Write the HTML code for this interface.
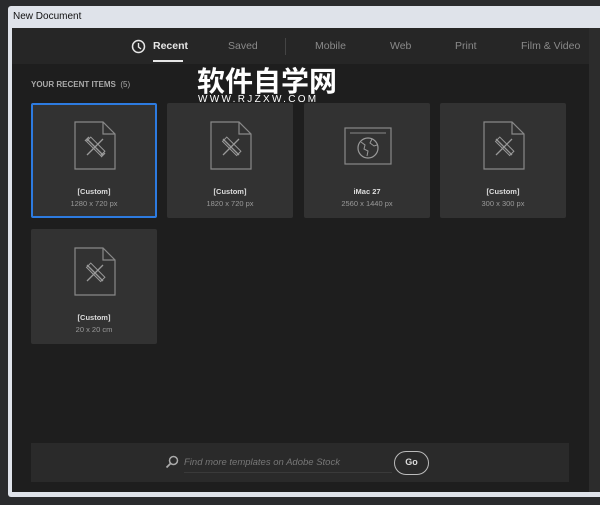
<!DOCTYPE html>
<html><head><style>
*{margin:0;padding:0;box-sizing:border-box}
body{width:600px;height:505px;background:#2a2b2d;position:relative;overflow:hidden;font-family:"Liberation Sans",sans-serif}
.frame{position:absolute;left:8px;top:6px;width:600px;height:491px;background:#dfe3ea;border-radius:3px}
.title{position:absolute;left:13px;top:11px;font-size:10px;color:#111}
.content{position:absolute;left:12px;top:28px;width:577px;height:464px;background:#1e1e1e}
.right{position:absolute;left:589px;top:28px;width:11px;height:464px;background:#2c2c2c}
.tabs{position:absolute;left:0;top:0;width:577px;height:36px;background:#262626}
.tab{position:absolute;top:12px;font-size:10.5px;color:#8a8a8a}
.tab.on{color:#e6e6e6;font-weight:bold}
.ul{position:absolute;left:141px;top:32px;width:30px;height:2px;background:#e6e6e6}
.sep{position:absolute;left:273px;top:10px;width:1px;height:17px;background:#444}
.hdr{position:absolute;left:19px;top:52px;font-size:8px;font-weight:bold;color:#aaa}
.card{position:absolute;width:126px;height:115px;background:#323232;border-radius:2px}
.card.sel{border:2px solid #2d7be0}
.card svg{position:absolute;left:43px;top:18px}
.n{position:absolute;left:0;width:100%;top:84px;text-align:center;font-size:7.5px;color:#ddd;font-weight:bold}
.d{position:absolute;left:0;width:100%;top:96px;text-align:center;font-size:7.5px;color:#999}
.search{position:absolute;left:19px;top:415px;width:538px;height:39px;background:#2a2a2a}
.st{position:absolute;left:153px;top:14px;font-size:9.5px;font-style:italic;color:#777}
.sl{position:absolute;left:153px;top:29px;width:208px;height:1px;background:#3a3a3a}
.go{position:absolute;left:363px;top:8px;width:35px;height:24px;border:1.5px solid #bbb;border-radius:12px;color:#ddd;font-size:9px;font-weight:bold;text-align:center;line-height:21px}
.wm{position:absolute;left:185px;top:37px;font-family:"Noto Sans CJK SC",sans-serif;font-weight:bold;font-size:28px;color:#fff;letter-spacing:0px;line-height:30px}
.wm2{position:absolute;left:186px;top:66px;font-size:10px;color:#fff;letter-spacing:2.3px}
</style></head><body>
<div class="frame"></div>
<div class="title">New Document</div>
<div class="right"></div>
<div class="content">
 <div class="tabs">
  <svg style="position:absolute;left:119px;top:11px" width="15" height="15" viewBox="0 0 15 15"><circle cx="7.5" cy="7.5" r="6" fill="none" stroke="#e6e6e6" stroke-width="1.5"/><path d="M7.5 4v4l2.5 2" fill="none" stroke="#e6e6e6" stroke-width="1.4"/></svg>
  <div class="tab on" style="left:141px">Recent</div>
  <div class="tab" style="left:216px">Saved</div>
  <div class="sep"></div>
  <div class="tab" style="left:303px">Mobile</div>
  <div class="tab" style="left:378px">Web</div>
  <div class="tab" style="left:443px">Print</div>
  <div class="tab" style="left:509px">Film &amp; Video</div>
  <div class="ul"></div>
 </div>
 <div class="hdr">YOUR RECENT ITEMS &nbsp;<span style="font-weight:normal">(5)</span></div>
 <div class="wm">软件自学网</div>
 <div class="wm2">WWW.RJZXW.COM</div>

 <div class="card sel" style="left:19px;top:75px"><svg style="left:41px;top:16px" width="42" height="49" viewBox="0 0 42 49"><path d="M1 1h28l12 12v35H1z M29 1v12h12" fill="none" stroke="#888" stroke-width="1.2"/><path d="M13 18l16 16M29 18L13 34M15 16l-4 4 M27 36l4-4" fill="none" stroke="#999" stroke-width="1.3"/><rect x="11" y="22" width="20" height="6" transform="rotate(45 21 26)" fill="none" stroke="#999" stroke-width="1"/></svg><div class="n" style="top:82px">[Custom]</div><div class="d" style="top:94px">1280 x 720 px</div></div>

 <div class="card" style="left:155px;top:75px"><svg width="42" height="49" viewBox="0 0 42 49"><path d="M1 1h28l12 12v35H1z M29 1v12h12" fill="none" stroke="#888" stroke-width="1.2"/><path d="M13 18l16 16M29 18L13 34" fill="none" stroke="#999" stroke-width="1.3"/><rect x="11" y="22" width="20" height="6" transform="rotate(45 21 26)" fill="none" stroke="#999" stroke-width="1"/></svg><div class="n">[Custom]</div><div class="d">1820 x 720 px</div></div>

 <div class="card" style="left:292px;top:75px"><svg style="left:40px;top:24px" width="48" height="38" viewBox="0 0 48 38"><rect x="1" y="1" width="46" height="36" fill="none" stroke="#888" stroke-width="1.2"/><path d="M6 6h36" stroke="#888"/><circle cx="24" cy="21" r="10" fill="none" stroke="#999" stroke-width="1.2"/><path d="M17 15l4 3-1 4 4 2-1 5M28 12l-2 4 4 3 3-1" fill="none" stroke="#999"/></svg><div class="n">iMac 27</div><div class="d">2560 x 1440 px</div></div>

 <div class="card" style="left:428px;top:75px"><svg width="42" height="49" viewBox="0 0 42 49"><path d="M1 1h28l12 12v35H1z M29 1v12h12" fill="none" stroke="#888" stroke-width="1.2"/><path d="M13 18l16 16M29 18L13 34" fill="none" stroke="#999" stroke-width="1.3"/><rect x="11" y="22" width="20" height="6" transform="rotate(45 21 26)" fill="none" stroke="#999" stroke-width="1"/></svg><div class="n">[Custom]</div><div class="d">300 x 300 px</div></div>

 <div class="card" style="left:19px;top:201px"><svg width="42" height="49" viewBox="0 0 42 49"><path d="M1 1h28l12 12v35H1z M29 1v12h12" fill="none" stroke="#888" stroke-width="1.2"/><path d="M13 18l16 16M29 18L13 34" fill="none" stroke="#999" stroke-width="1.3"/><rect x="11" y="22" width="20" height="6" transform="rotate(45 21 26)" fill="none" stroke="#999" stroke-width="1"/></svg><div class="n">[Custom]</div><div class="d">20 x 20 cm</div></div>

 <div class="search">
  <svg style="position:absolute;left:134px;top:12px" width="14" height="14" viewBox="0 0 14 14"><circle cx="8.5" cy="5.5" r="4" fill="none" stroke="#aaa" stroke-width="1.5"/><path d="M5.5 8.5L1.5 12.5" stroke="#aaa" stroke-width="1.8"/></svg>
  <div class="st">Find more templates on Adobe Stock</div>
  <div class="sl"></div>
  <div class="go">Go</div>
 </div>
</div>
</body></html>
